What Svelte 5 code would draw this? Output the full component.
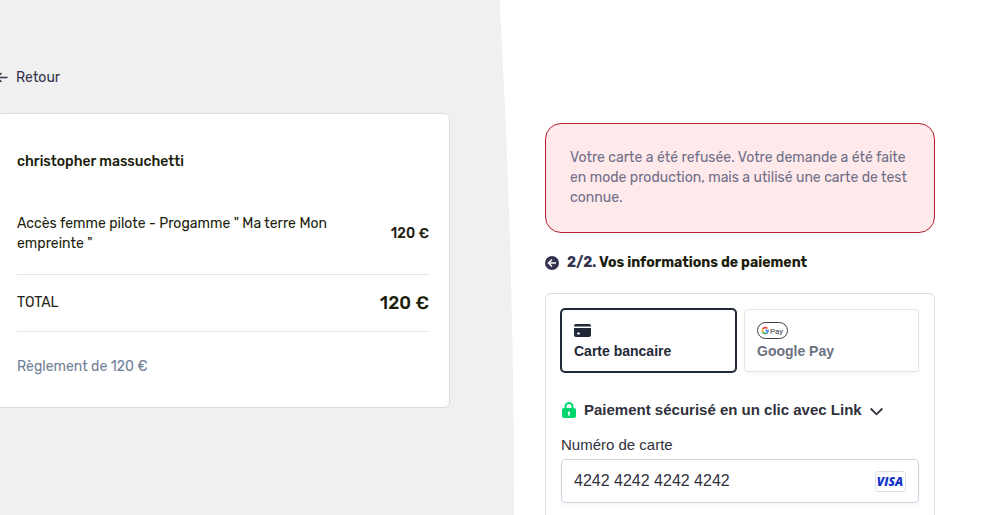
<script lang="ts">
	const methods = [
		{ id: "card", label: "Carte bancaire" },
		{ id: "gpay", label: "Google Pay" },
	];

	let method = $state("card");
	let linkOpen = $state(false);
	let cardNumber = $state("4242 4242 4242 4242");
</script>

<main class="checkout">
	<section class="summary">
		<a class="summary__back" href="#retour">
			<svg viewBox="0 0 12 12" aria-hidden="true">
				<path d="M11.5 5.5H1M5.500 1 1 5.5 5.500 10" />
			</svg>
			Retour
		</a>

		<div class="summary__card">
			<h1>christopher massuchetti</h1>
			<div class="summary__row">
				<span>Accès femme pilote - Progamme " Ma terre Mon empreinte "</span>
				<strong>120 €</strong>
			</div>
			<div class="summary__row summary__row--total">
				<span>TOTAL</span>
				<strong>120 €</strong>
			</div>
			<p>Règlement de 120 €</p>
		</div>
	</section>

	<section class="payment">
		<p class="payment__error" role="alert">
			Votre carte a été refusée. Votre demande a été faite en mode production, mais a utilisé une
			carte de test connue.
		</p>

		<h2>
			<a href="#etape-1" aria-label="Étape précédente">
				<svg viewBox="0 0 14 14" aria-hidden="true">
					<circle cx="7" cy="7" r="7" />
					<path d="M11 7H3.5M7 3.5 3.5 7 7 10.5" />
				</svg>
			</a>
			<span><span class="payment__step">2/2.</span> Vos informations de paiement</span>
		</h2>

		<form class="panel" onsubmit={(event) => event.preventDefault()}>
			<div class="methods">
				{#each methods as { id, label }}
					<button
						type="button"
						class="method"
						class:method--active={method === id}
						aria-pressed={method === id}
						onclick={() => (method = id)}
					>
						<span class="method__icon">
							{#if id === "card"}
								<svg width="17" height="13" viewBox="0 0 17 13" aria-hidden="true">
									<path fill="#1f2937" d="M0 2.5V2a2 2 0 0 1 2-2h13a2 2 0 0 1 2 2v.5z" />
									<path fill="#1f2937" fill-rule="evenodd" d="M0 4h17v7a2 2 0 0 1-2 2H2a2 2 0 0 1-2-2zM4 8.5a1 1 0 0 0 0 2h1a1 1 0 0 0 0-2z" />
								</svg>
							{:else}
								<svg width="31" height="17" viewBox="0 0 31 17" aria-hidden="true">
									<rect x=".5" y=".5" width="30" height="16" rx="8" fill="#fff" stroke="#3c4043" />
									<g fill="none" stroke-width="1.6">
										<path stroke="#ea4335" d="M10.4 6.5A2.9 2.9 0 0 0 5.7 7.2" />
										<path stroke="#fbbc04" d="M5.7 7.2a2.9 2.9 0 0 0 0 2.6" />
										<path stroke="#34a853" d="M5.7 9.8a2.9 2.9 0 0 0 4.4 1" />
										<path stroke="#4285f4" d="M10.1 10.8a2.9 2.9 0 0 0 1-2.3H8.3" />
									</g>
									<text x="13" y="12" fill="#3c4043">Pay</text>
								</svg>
							{/if}
						</span>
						{label}
					</button>
				{/each}
			</div>

			<button
				type="button"
				class="link-toggle"
				aria-expanded={linkOpen}
				onclick={() => (linkOpen = !linkOpen)}
			>
				<svg width="14" height="16" viewBox="0 0 14 16" aria-hidden="true">
					<path fill="none" stroke="#00d66f" stroke-width="2" d="M3.5 7V4.5a3.5 3.5 0 0 1 7 0V7" />
					<path fill="#00d66f" fill-rule="evenodd" d="M2 6h10a2 2 0 0 1 2 2v6a2 2 0 0 1-2 2H2a2 2 0 0 1-2-2V8a2 2 0 0 1 2-2zM7 9.5a1.2 1.2 0 0 0-.8 2.1v1.9h1.6v-1.9A1.2 1.2 0 0 0 7 9.5z" />
				</svg>
				<span>Paiement sécurisé en un clic avec Link</span>
				<svg width="13" height="12" viewBox="0 0 13 12" aria-hidden="true">
					<path fill="none" stroke="#30313d" stroke-width="1.8" d="m.7 4.5 5.8 5.8 5.8-5.8" />
				</svg>
			</button>

			<label for="card-number">Numéro de carte</label>
			<div class="card-field">
				<input id="card-number" type="text" inputmode="numeric" bind:value={cardNumber} />
				<svg width="31" height="21" viewBox="0 0 31 21" role="img" aria-label="Visa">
					<rect x=".5" y=".5" width="30" height="20" rx="2" fill="#fff" stroke="#dcdee2" />
					<text x="15" y="15" text-anchor="middle" fill="#1434cb">VISA</text>
				</svg>
			</div>
		</form>
	</section>
</main>

<style>
	:global(body) {
		background: #fff;
	}

	.checkout {
		display: grid;
		grid-template-columns: minmax(0, 514fr) minmax(0, 480fr);
		grid-template-rows: 100%;
		height: 100vh;
		overflow: hidden;
		color: #1d1e0e;
		font-family: Rubik, Roboto, sans-serif;
		font-size: 14px;
		line-height: 20px;
	}

	.summary {
		box-sizing: border-box;
		padding: 68px 64px 0 0;
		background: #f0f0f0;
		clip-path: ellipse(100% 424% at 0 100%);
	}

	.summary__back {
		display: flex;
		align-items: center;
		gap: 8px;
		margin-left: -4px;
		color: #33334f;
		text-decoration: none;
	}

	.summary__back svg {
		width: 12px;
		height: 12px;
		fill: none;
		stroke: currentColor;
		stroke-width: 1.5;
	}

	.summary__card {
		margin: 25px 0 0 -4px;
		padding: 38px 20px 30px;
		border: 1px solid #dcdcdc;
		border-radius: 6px;
		background: #fff;
	}

	h1,
	h2 {
		margin: 0;
		font-size: 14px;
		font-weight: 500;
	}

	.summary__row {
		display: flex;
		align-items: center;
		justify-content: space-between;
		gap: 48px;
		padding: 42px 0 20px;
		border-bottom: 1px solid #e5e5e5;
	}

	.summary__row strong {
		flex: none;
		font-weight: 500;
	}

	.summary__row--total {
		padding: 18px 0;
	}

	.summary__row--total strong {
		font-size: 18px;
	}

	.summary__card p {
		margin: 25px 0 0;
		color: #718096;
	}

	.payment {
		padding: 123px 59px 0 31px;
	}

	.payment__error {
		margin: 0;
		padding: 24px;
		border: 1px solid #b0232f;
		border-radius: 16px;
		background: #ffe9eb;
		color: #6f6f88;
	}

	h2 {
		display: flex;
		align-items: center;
		gap: 8px;
		margin: 20px 0;
		font-weight: 700;
	}

	h2 a {
		display: flex;
	}

	h2 svg {
		width: 14px;
		height: 14px;
		fill: #33334f;
	}

	h2 path {
		fill: none;
		stroke: #fff;
		stroke-width: 1.5;
	}

	.payment__step {
		color: #33334f;
	}

	.panel {
		padding: 15px 15px 24px;
		border: 1px solid #dcdcdc;
		border-radius: 6px;
		color: #30313d;
		font-family: "Liberation Sans", Arial, sans-serif;
		font-size: 15px;
	}

	.methods {
		display: grid;
		grid-template-columns: 1fr 1fr;
		gap: 8px;
	}

	.method {
		height: 63px;
		padding: 10px 12px;
		border: 1px solid #e6e6e6;
		border-radius: 4px;
		background: #fff;
		box-shadow: 0 2px 4px rgb(0 0 0 / 4%);
		color: #6b7280;
		font: bold 14px/20px "Liberation Sans", Arial, sans-serif;
		text-align: left;
	}

	.method--active {
		border-color: #1f2937;
		box-shadow: 0 0 0 1px #1f2937;
		color: #1f2937;
	}

	.method__icon {
		display: flex;
		align-items: center;
		height: 21px;
	}

	.method__icon text {
		font: 8px Roboto, sans-serif;
	}

	.link-toggle {
		display: flex;
		align-items: center;
		gap: 8px;
		margin: 28px 0 15px;
		padding: 0 1px;
		border: 0;
		background: none;
		color: #30313d;
		font: bold 15px/20px "Liberation Sans", Arial, sans-serif;
	}

	label {
		display: block;
		margin-bottom: 4px;
	}

	.card-field {
		display: flex;
		align-items: center;
		height: 42px;
		padding: 0 12px;
		border: 1px solid #cbd5e0;
		border-radius: 4px;
		box-shadow: 0 2px 4px rgb(0 0 0 / 4%);
	}

	.card-field input {
		flex: 1;
		min-width: 0;
		padding: 0;
		border: 0;
		outline: 0;
		background: none;
		color: #30313d;
		font: 16px "Liberation Sans", Arial, sans-serif;
	}

	.card-field text {
		font: italic 800 12px "Open Sans", sans-serif;
	}
</style>
